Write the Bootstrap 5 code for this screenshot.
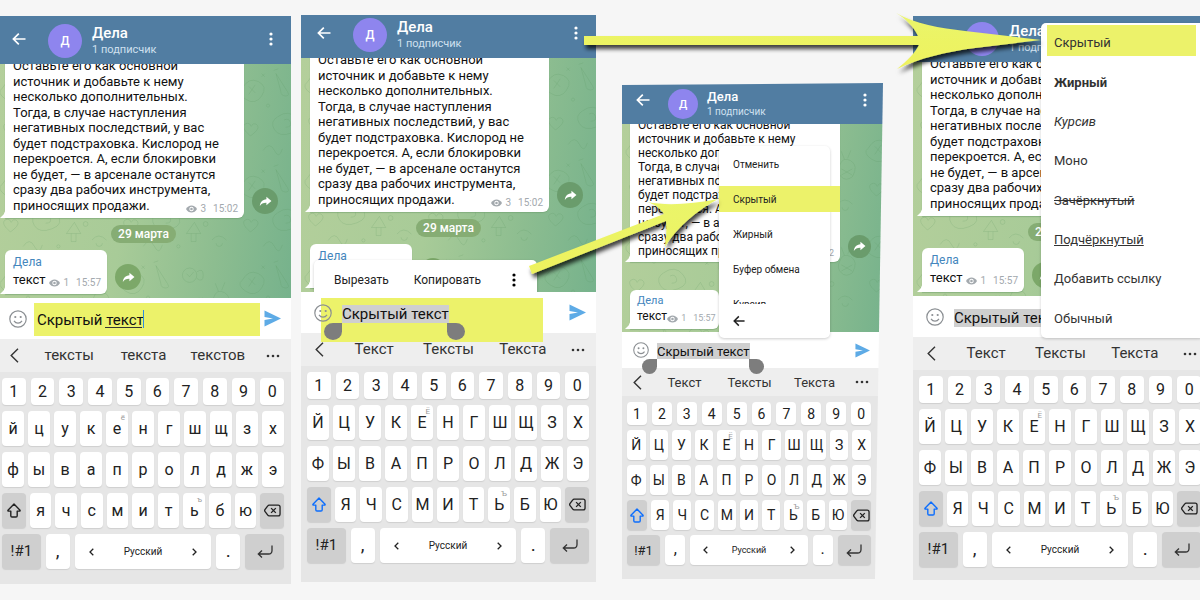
<!DOCTYPE html>
<html lang="ru">
<head>
<meta charset="utf-8">
<meta name="viewport" content="width=device-width, initial-scale=1">
<title>Скрытый текст</title>
<link href="https://cdn.jsdelivr.net/npm/bootstrap@5.3.0/dist/css/bootstrap.min.css" rel="stylesheet">
<style>
body{background:#f6f6f6;font-family:Roboto,"Liberation Sans",sans-serif;color:#111;line-height:1;overflow-x:hidden}
svg{display:block;flex:none}
button{font-family:inherit;line-height:1;border:0;padding:0;background:none;color:inherit}
.stage{margin:0 -8px 0 -4px;min-height:600px}
.phone{flex:295 1 0;min-width:0}
.phone-a{margin-top:16px;--head:48px;--tail:15px}
.phone-b{margin-top:15px;margin-left:10px;--head:43px;--tail:19px}
.phone-c{flex-grow:261;margin-top:83px;margin-left:26px;--head:41px;--tail:14px;clip-path:polygon(0 2px,100% 0,calc(100% - 8px) 100%,0 100%)}
.phone-d{margin-top:16px;margin-left:30px;--head:46px;--tail:13px}
.topbar{height:var(--head);background:#517da2;padding:0 18px 6px 16px;color:#fff}
.avatar{width:34px;height:34px;background:#8e85ee;font-size:12px;font-weight:500;margin:0 10px 0 22px}
.who{font-size:15px;line-height:18px;font-weight:500}
.subs{font-size:11px;line-height:16px;color:#cfe0ef}
.chat{height:234px;background:linear-gradient(98deg,#b4cf9b 0%,#a8cb98 45%,#8dbd90 75%,#76b28c 100%);padding:0 9px 4px;gap:7px}
.doodles{inset:0;width:100%;height:100%}
.bubble{background:#fff;border-radius:6px 6px 6px 0;padding:0 8px;box-shadow:0 1px 1px #6a9a6a80}
.bubble::before{content:"";position:absolute;left:-5px;bottom:0;width:6px;height:9px;background:#fff;clip-path:polygon(100% 0,100% 100%,0 100%,60% 60%)}
.post{width:239px;height:172px;padding-bottom:5px}
.post p{height:155px;font-size:13px;line-height:15px;white-space:nowrap}
.meta{font-size:10px;color:#a3a9ae;gap:3px}
.post .meta{right:6px;bottom:4px}
.note{width:102px;height:44px;padding:4px 6px 4px 8px}
.author{font-size:12px;line-height:16px;color:#4486bd}
.word{font-size:13px;line-height:20px}
.note .meta{padding-bottom:2px}
.day{height:18px;border-radius:9px;background:#86ad74;color:#fff;font-size:12px;font-weight:500;padding:0 7px}
.share{width:26px;height:26px;background:#6a9c6c}
.share.pale{background:#7ca869}
.compose{height:41px;background:#fff;padding:0 10px 0 13px}
.smile{width:18px;height:18px}
.field{border:0;outline:0;padding:0 3px;height:33px;font-size:15px;color:#111;background:#ecf26a;margin:2px 0 0 7px;min-width:0;flex:1}
.field-sel{flex:none;width:107px;height:18px;padding:0;margin:2px 0 0 10px;background:#cfcfcf}
.send{width:17px;height:17px}
.squiggle{left:78px;bottom:8px;width:37px;height:1px;background:#333}
.caret{left:116px;top:9px;width:1px;height:18px;background:#2f8fe0}
.grip{width:18px;height:17px;background:#7d7d7d;border-radius:50% 0 50% 50%;left:23px;top:31px}
.grip-end{border-radius:0 50% 50% 50%;left:146px}
.marker{left:20px;top:6px;width:222px;height:44px;background:#ecf26a}
.suggest{height:33px;background:#eee;font-size:15px;color:#333}
.side{width:36px}
.board{background:#e6e6e6;padding:6px 7px var(--tail) 6px;gap:6px}
.keys{height:35px;gap:4px}
.keys.nums{height:27px;gap:5px}
.keys.base{gap:5px}
.key{flex:1 1 0;min-width:0;background:#fff;border-radius:4px;box-shadow:0 1px 1px #cfcfcf;font-size:16px;color:#222}
.key.dark{background:#cfcfcf}
.key small{position:absolute;right:3px;top:3px;font-size:8px;color:#999}
.k-24{flex-grow:24}.k-39{flex-grow:39}.k-138{flex-grow:138}
.k-mod{flex-grow:1.1}
.key.point{font-size:19px;padding-bottom:2px}
.lang{font-size:10px}
.key.sym{font-size:15px}
.popup{background:#fff;border-radius:5px;box-shadow:0 1px 3px #0003;color:#222}
.clip-menu{left:13px;top:245px;width:223px;height:39px;font-size:12px;font-weight:500;padding:0 21px 0 20px;gap:25px}
.list-menu{left:97px;top:63px;width:111px;height:192px;font-size:10px;font-weight:600}
.list-menu .items{height:158px;padding-top:1px;clip-path:inset(0 -12px 0 0)}
.list-menu .entry{height:35px;padding-left:14px;flex:none}
.list-menu .leave{padding:11px 14px}
.lit{position:relative}
.lit::before{content:"";position:absolute;background:#ecf26a;z-index:-1}
.list-menu .lit::before{left:0;top:4px;width:121px;height:26px}
.entry{text-align:left}
.style-menu{left:128px;top:7px;width:163px;height:315px;font-size:13px;color:#333}
.style-menu .entry{padding-left:13px;flex:1}
.style-menu .lit::before{left:6px;top:2px;width:149px;height:31px}
.pointers{left:0;top:0;width:100%;height:600px}
.phone-c .topbar{padding:0 16px 5px 14px}
.phone-c .avatar{width:30px;height:30px;margin:0 9px 0 18px;font-size:11px}
.phone-c .who{font-size:13px;line-height:15px}
.phone-c .subs{font-size:10px;line-height:15px}
.phone-c .chat{height:208px;padding:0 8px 3px}
.phone-c .post{width:210px;height:153px;padding-bottom:4px}
.phone-c .post p{height:140px;font-size:12px;line-height:14px}
.phone-c .meta{font-size:9px}
.phone-c .note{width:89px;height:39px;padding:4px 5px 3px 7px}
.phone-c .author{font-size:11px;line-height:14px}
.phone-c .word{font-size:12px;line-height:17px}
.phone-c .day{height:14px;font-size:10px}
.phone-c .share{width:23px;height:23px}
.phone-c .compose{height:36px;padding:0 13px 0 11px}
.phone-c .smile{width:16px;height:16px}
.phone-c .field-sel{font-size:13px;width:93px;height:16px;margin-left:8px}
.phone-c .send{width:15px;height:15px}
.phone-c .grip{width:15px;height:15px;left:20px;top:27px}
.phone-c .grip-end{left:127px}
.phone-c .suggest{height:28px;font-size:13px;padding-right:6px}
.phone-c .side{width:30px}
.phone-c .board{padding:6px 12px var(--tail) 5px;gap:5px}
.phone-c .keys{height:30px}
.phone-c .keys.nums{height:23px}
.phone-c .key{font-size:14px}
.phone-c .key.sym{font-size:13px}
.phone-c .key.point{font-size:16px}
.phone-c .lang{font-size:9px}
</style>
</head>
<body>
<svg width="0" height="0" class="position-absolute" aria-hidden="true">
 <defs>
  <symbol id="i-back" viewBox="0 0 14 14"><path d="M13.500 7H1.500M6.800 1.600 1.400 7l5.400 5.400" fill="none" stroke="currentColor" stroke-width="1.700"/></symbol>
  <symbol id="i-dots" viewBox="0 0 4 14"><circle cx="2" cy="2" r="1.600"/><circle cx="2" cy="7" r="1.600"/><circle cx="2" cy="12" r="1.600"/></symbol>
  <symbol id="i-more" viewBox="0 0 14 4"><circle cx="2" cy="2" r="1.300"/><circle cx="7" cy="2" r="1.300"/><circle cx="12" cy="2" r="1.300"/></symbol>
  <symbol id="i-eye" viewBox="0 0 12 8"><path d="M0 4C2.500-1.200 9.500-1.200 12 4 9.500 9.200 2.500 9.200 0 4Z" fill="#a3a9ae"/><circle cx="6" cy="4" r="2.400" fill="#fff"/><circle cx="6" cy="4" r="1.400" fill="#a3a9ae"/></symbol>
  <symbol id="i-share" viewBox="0 0 14 12"><path d="M8 .8 13.500 5.500 8 10V7.300C4.600 7.200 2.500 8.200.8 10.800 1.200 6.400 3.700 3.900 8 3.500Z" fill="#fff"/></symbol>
  <symbol id="i-smile" viewBox="0 0 18 18"><circle cx="9" cy="9" r="8.200" fill="none" stroke="#8b8f93" stroke-width="1.200"/><circle cx="6.300" cy="7" r="1.100" fill="#8b8f93"/><circle cx="11.700" cy="7" r="1.100" fill="#8b8f93"/><path d="M5 10.800c2 3 6 3 8 0" fill="none" stroke="#8b8f93" stroke-width="1.200"/></symbol>
  <symbol id="i-send" viewBox="0 0 17 17"><path d="M.5.500 17 8.500.5 16.500V10L9 8.500.5 7Z" fill="#5eabe6"/></symbol>
  <symbol id="i-prev" viewBox="0 0 9 15"><path d="M8 .8 1.200 7.500 8 14.200" fill="none" stroke="#333" stroke-width="1.400"/></symbol>
  <symbol id="i-shift" viewBox="0 0 14 15"><path d="M7 1 1 7.200c-.3.500 0 .9.500.9h2.300v4.700q0 1.200 1.200 1.200h4q1.200 0 1.200-1.200V8.100h2.300c.5 0 .8-.4.500-.9Z" fill="none" stroke="currentColor" stroke-width="1.400" stroke-linejoin="round"/></symbol>
  <symbol id="i-del" viewBox="0 0 18 13"><path d="M5.500.8H15q2 0 2 2v7.400q0 2-2 2H5.500Q4.500 12.200 4 11.500L1 7.500q-.6-1 0-2L4 1.500Q4.500.8 5.500.8ZM7.500 4l5 5M12.500 4l-5 5" fill="none" stroke="#222" stroke-width="1.400"/></symbol>
  <symbol id="i-enter" viewBox="0 0 16 13"><path d="M15 .5v5q0 3.500-3.500 3.500H1.500M5 5.500 1.300 9 5 12.500" fill="none" stroke="#333" stroke-width="1.300"/></symbol>
  <symbol id="i-lt" viewBox="0 0 5 8"><path d="M4.300.8 1 4l3.300 3.200" fill="none" stroke="#222" stroke-width="1.300"/></symbol>
  <symbol id="i-gt" viewBox="0 0 5 8"><path d="M.7.800 4 4 .7 7.200" fill="none" stroke="#222" stroke-width="1.300"/></symbol>
  <pattern id="doodle" width="150" height="120" patternUnits="userSpaceOnUse" patternTransform="scale(.8)">
   <g fill="none" stroke="#4d8a55" stroke-opacity=".2" stroke-width="1">
    <path d="M8 30q8-14 20-8t4 18-20 4-4-14M16 28l8 8M24 26l-8 12"/>
    <path d="M50 12l14 22q4 6-2 6t-6-6ZM47 8l6-2"/>
    <circle cx="92" cy="24" r="9"/><path d="M88 22l4 4 5-6M101 20q8-6 8 4t-8 4"/>
    <path d="M122 52q4-12 14-6t2 20q-8 6-14 0t-2-14M128 44l-4-10M132 43l4-10M124 56l14 8M124 64l14-8"/>
    <path d="M12 84q-6-8 2-10 4 0 5 4 2-5 6-3 6 4-2 11l-5 4ZM52 66q14-10 24 2t-6 18-22-4 4-16M60 70q6-3 8 3t-6 6"/>
    <path d="M88 92l10-14 8 14ZM94 92v10h6V92M120 100q8-10 18 0M125 104a4 4 0 1 0 8 0M34 108q8-12 14 0t10-2"/>
    <circle cx="40" cy="52" r="2"/><circle cx="112" cy="80" r="3"/><circle cx="78" cy="108" r="2"/><path d="M32 12l4 4M36 12l-4 4M104 52l4 4M108 52l-4 4"/>
   </g>
  </pattern>
 </defs>
</svg>

<main class="position-relative">
<div class="stage d-flex align-items-start">

 <section class="phone phone-a position-relative" data-case="lower" data-words="тексты текста текстов">
  <header class="topbar d-flex align-items-end"></header>
  <div class="chat position-relative overflow-hidden d-flex flex-column justify-content-end"></div>
  <div class="compose position-relative d-flex align-items-center">
   <svg class="smile"><use href="#i-smile"/></svg>
   <div class="position-relative d-flex flex-fill">
    <input class="field" type="text" aria-label="Сообщение" value="Скрытый текст">
    <span class="squiggle position-absolute"></span><span class="caret position-absolute"></span>
   </div>
   <button class="ms-1" aria-label="Отправить"><svg class="send"><use href="#i-send"/></svg></button>
  </div>
 </section>

 <section class="phone phone-b position-relative" data-case="upper" data-words="Текст Тексты Текста">
  <header class="topbar d-flex align-items-end"></header>
  <div class="chat position-relative overflow-hidden d-flex flex-column justify-content-end"></div>
  <div class="compose position-relative z-1 d-flex align-items-center">
   <span class="marker position-absolute"></span>
   <svg class="smile position-relative"><use href="#i-smile"/></svg>
   <input class="field field-sel position-relative" type="text" aria-label="Сообщение" value="Скрытый текст">
   <button class="ms-auto" aria-label="Отправить"><svg class="send"><use href="#i-send"/></svg></button>
   <span class="grip position-absolute"></span><span class="grip grip-end position-absolute"></span>
  </div>
  <div class="popup clip-menu position-absolute d-flex align-items-center">
   <button>Вырезать</button><button>Копировать</button><button class="ms-auto" aria-label="Ещё"><svg width="4" height="14"><use href="#i-dots"/></svg></button>
  </div>
 </section>

 <section class="phone phone-c position-relative" data-case="upper" data-words="Текст Тексты Текста">
  <header class="topbar d-flex align-items-end"></header>
  <div class="chat position-relative overflow-hidden d-flex flex-column justify-content-end"></div>
  <div class="compose position-relative z-1 d-flex align-items-center">
   <svg class="smile"><use href="#i-smile"/></svg>
   <input class="field field-sel" type="text" aria-label="Сообщение" value="Скрытый текст">
   <button class="ms-auto" aria-label="Отправить"><svg class="send"><use href="#i-send"/></svg></button>
   <span class="grip position-absolute"></span><span class="grip grip-end position-absolute"></span>
  </div>
  <div class="popup list-menu position-absolute z-2">
   <div class="items d-flex flex-column position-relative z-0">
    <button class="entry">Отменить</button><button class="entry lit">Скрытый</button><button class="entry">Жирный</button><button class="entry">Буфер обмена</button><button class="entry">Курсив</button>
   </div>
   <button class="leave d-flex" aria-label="Назад"><svg width="12" height="12"><use href="#i-back"/></svg></button>
  </div>
 </section>

 <section class="phone phone-d position-relative" data-case="upper" data-words="Текст Тексты Текста">
  <header class="topbar d-flex align-items-end"></header>
  <div class="chat position-relative overflow-hidden d-flex flex-column justify-content-end"></div>
  <div class="compose d-flex align-items-center">
   <svg class="smile"><use href="#i-smile"/></svg>
   <input class="field field-sel" type="text" aria-label="Сообщение" value="Скрытый текст">
  </div>
  <div class="popup style-menu position-absolute d-flex flex-column z-1">
   <button class="entry lit z-0">Скрытый</button><button class="entry fw-bold">Жирный</button><button class="entry fst-italic">Курсив</button><button class="entry">Моно</button><button class="entry text-decoration-line-through">Зачёркнутый</button><button class="entry text-decoration-underline">Подчёркнутый</button><button class="entry">Добавить ссылку</button><button class="entry">Обычный</button>
  </div>
 </section>
</div>

<svg class="pointers position-absolute pe-none z-3" viewBox="0 0 1200 600" preserveAspectRatio="none" aria-hidden="true">
 <defs>
  <linearGradient id="shine" x1="0" y1="0" x2="0" y2="1"><stop offset="0" stop-color="#eaf56a"/><stop offset="1" stop-color="#eef25e"/></linearGradient>
  <filter id="drop" x="-10%" y="-60%" width="120%" height="250%"><feDropShadow dx="2" dy="4" stdDeviation="2" flood-color="#000" flood-opacity=".75"/></filter>
 </defs>
 <g fill="url(#shine)" filter="url(#drop)">
  <path d="M584 36H918C914 27 906 19 896 13 915 24 940 28 965 31L1041 40 975 48C945 52 920 58 897 69 907 61 915 53 919 45H584Z"/>
  <path d="M529 266 664 214C660 208 654 204 647 202 668 206 692 204 718 199 696 211 676 228 665 247 666 238 667 229 666 221L532 274Z"/>
 </g>
</svg>
</main>

<script>
const icon = (id, w, h) => `<svg width="${w}" height="${h}" fill="currentColor"><use href="#${id}"/></svg>`;
const post = ['Оставьте его как основной','источник и добавьте к нему','несколько дополнительных.','Тогда, в случае наступления','негативных последствий, у вас','будет подстраховка. Кислород не','перекроется. А, если блокировки','не будет, — в арсенале останутся','сразу два рабочих инструмента,','приносящих продажи.'];
const share = cls => `<button class="share ${cls} rounded-circle d-flex align-items-center justify-content-center" aria-label="Поделиться">${icon('i-share',13,11)}</button>`;

const header = `
 <button aria-label="Назад" class="mb-2 pb-1">${icon('i-back',14,14)}</button>
 <div class="avatar rounded-circle d-flex align-items-center justify-content-center">Д</div>
 <div><div class="who">Дела</div><div class="subs">1 подписчик</div></div>
 <button class="ms-auto mb-2 pb-1" aria-label="Меню">${icon('i-dots',4,14)}</button>`;

const chat = `
 <svg class="doodles position-absolute"><rect width="100%" height="100%" fill="url(#doodle)"/></svg>
 <div class="position-relative d-flex align-items-end gap-2">
  <div class="bubble post position-relative flex-shrink-0 d-flex flex-column justify-content-end">
   <p class="mb-0 d-flex flex-column justify-content-between">${post.map(t => `<span>${t}</span>`).join(' ')}</p>
   <div class="meta position-absolute d-flex align-items-center">${icon('i-eye',11,8)}<span>3</span><span class="ms-1">15:02</span></div>
  </div>
  <div class="mb-1">${share('')}</div>
 </div>
 <div class="position-relative d-flex justify-content-center"><div class="day d-flex align-items-center">29 марта</div></div>
 <div class="position-relative d-flex align-items-end gap-2">
  <div class="bubble note position-relative">
   <div class="author">Дела</div>
   <div class="d-flex justify-content-between align-items-end"><span class="word">текст</span><span class="meta d-flex align-items-center">${icon('i-eye',11,8)}<span>1</span><span class="ms-1">15:57</span></span></div>
  </div>
  <div class="mb-1">${share('pale')}</div>
 </div>`;

const key = (t, cls = '', hint = '') => `<button class="key position-relative d-flex align-items-center justify-content-center ${cls}">${t}${hint && `<small>${hint}</small>`}</button>`;

function keyboard(upper) {
  const c = s => upper ? s.toUpperCase() : s;
  const letters = s => [...s].map(l => key(c(l), '', l === 'е' ? c('ё') : l === 'ь' ? c('ъ') : '')).join('');
  return `<div class="board d-flex flex-column">
   <div class="keys nums d-flex">${[...'1234567890'].map(n => key(n)).join('')}</div>
   <div class="keys d-flex">${letters('йцукенгшщзх')}</div>
   <div class="keys d-flex">${letters('фывапролджэ')}</div>
   <div class="keys d-flex">${key(icon('i-shift',14,15), 'dark k-mod' + (upper ? ' text-primary' : ''))}${letters('ячсмитьбю')}${key(icon('i-del',17,13), 'dark k-mod')}</div>
   <div class="keys base d-flex">${key('!#1','dark k-39 sym')}${key(',','k-24 align-items-end point')}${key(icon('i-lt',5,8) + '<span class="lang">Русский</span>' + icon('i-gt',5,8),'k-138 justify-content-around')}${key('.','k-24 align-items-end point')}${key(icon('i-enter',16,13),'dark k-39')}</div>
  </div>`;
}

document.querySelectorAll('.phone').forEach(p => {
  p.querySelector('.topbar').innerHTML = header;
  p.querySelector('.chat').innerHTML = chat;
  const words = p.dataset.words.split(' ').map(w => `<button class="w-100">${w}</button>`).join('');
  p.insertAdjacentHTML('beforeend', `<div class="suggest d-flex align-items-center"><button class="side d-flex justify-content-center flex-shrink-0" aria-label="Свернуть">${icon('i-prev',9,15)}</button>${words}<button class="side d-flex justify-content-center flex-shrink-0" aria-label="Ещё">${icon('i-more',14,4)}</button></div>` + keyboard(p.dataset.case === 'upper'));
});
</script>
<script src="https://cdn.jsdelivr.net/npm/bootstrap@5.3.0/dist/js/bootstrap.bundle.min.js"></script>
</body>
</html>
